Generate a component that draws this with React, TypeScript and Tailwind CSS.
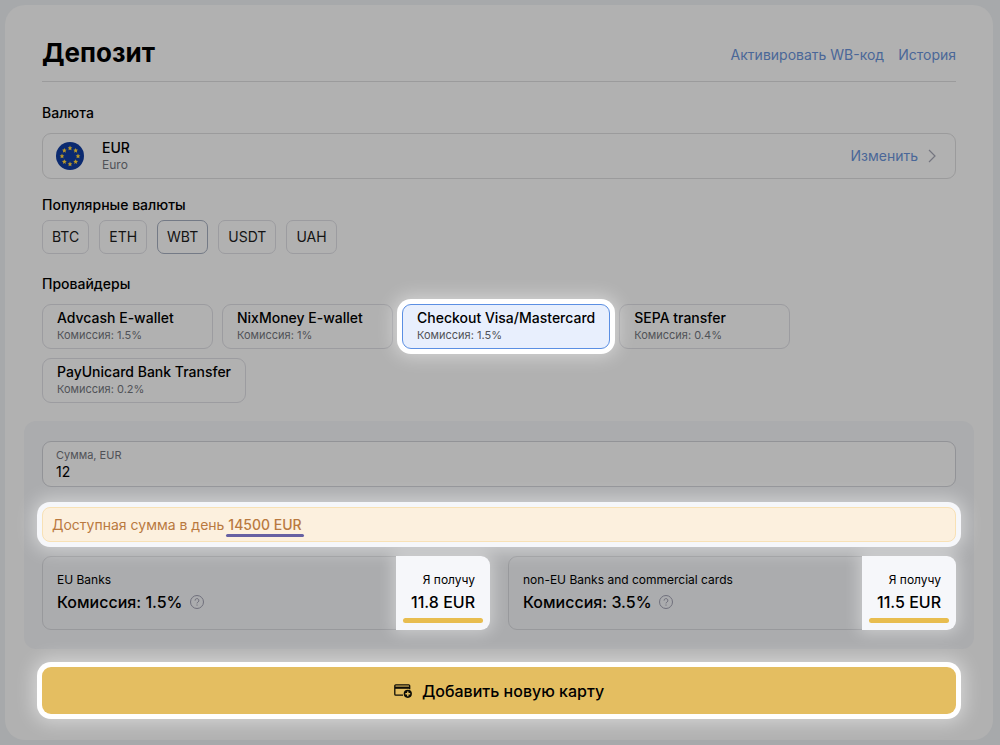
import React, { useState } from 'react'

interface Provider {
  name: string
  fee: string
}

interface BankOption {
  title: string
  fee: string
  receive: string
}

const currencies = ['BTC', 'ETH', 'WBT', 'USDT', 'UAH']

const providers: Provider[] = [
  { name: 'Advcash E-wallet', fee: '1.5%' },
  { name: 'NixMoney E-wallet', fee: '1%' },
  { name: 'Checkout Visa/Mastercard', fee: '1.5%' },
  { name: 'SEPA transfer', fee: '0.4%' },
  { name: 'PayUnicard Bank Transfer', fee: '0.2%' },
]

const banks: BankOption[] = [
  { title: 'EU Banks', fee: '1.5%', receive: '11.8 EUR' },
  { title: 'non-EU Banks and commercial cards', fee: '3.5%', receive: '11.5 EUR' },
]

const EuFlag = () => (
  <svg viewBox="0 0 28 28" className="w-7 h-7 shrink-0">
    <circle cx="14" cy="14" r="14" fill="#0b2a70" />
    {[0, 45, 90, 135, 180, 225, 270, 315].map((angle) => (
      <path
        key={angle}
        transform={`rotate(${angle} 14 14) rotate(${-angle} 14 6)`}
        d="M14 3.6l.7 1.6 1.7.2-1.3 1.1.4 1.8-1.5-.9-1.5.9.4-1.8-1.3-1.1 1.7-.2z"
        fill="#b9992a"
      />
    ))}
  </svg>
)

const ChevronIcon = () => (
  <svg viewBox="0 0 8 14" className="w-2 h-3.5" fill="none" stroke="#74757f" strokeWidth="1.2">
    <path d="M1 1l6 6-6 6" />
  </svg>
)

const HelpIcon = () => (
  <svg viewBox="0 0 14 14" className="w-3.5 h-3.5" fill="none" stroke="#70707c">
    <circle cx="7" cy="7" r="6.5" />
    <path d="M5.1 5.6a1.9 1.9 0 1 1 2.9 1.5c-.7.4-1 .7-1 1.3" />
    <path d="M7 9.5v1.1" />
  </svg>
)

const AddCardIcon = () => (
  <svg viewBox="0 0 18 14" className="w-[18px] h-3.5" fill="none" stroke="#0d0c06">
    <path d="M9 11.2H1.8a1 1 0 0 1-1-1V1.8a1 1 0 0 1 1-1h12.9a1 1 0 0 1 1 1v3.4" strokeWidth="1.3" />
    <path d="M1 3.7h14.6" strokeWidth="2.2" />
    <circle cx="13.8" cy="9.8" r="4.1" fill="#0d0c06" stroke="none" />
    <path d="M13.8 7.4v4.8M11.4 9.8h4.8" stroke="#e4be61" strokeWidth="1.4" />
  </svg>
)

export default function App() {
  const [currency, setCurrency] = useState('WBT')
  const [provider, setProvider] = useState('Checkout Visa/Mastercard')
  const [amount, setAmount] = useState('12')

  return (
    <div className="min-h-screen bg-[#a7a9ab] pt-[5px] pr-[7px] pb-1 pl-[5px] font-['Inter',sans-serif] text-sm leading-5 text-black">
      <main className="rounded-[20px] bg-[#b1b1b1] px-[37px] pt-8 pb-[26px]">
        <header className="flex items-end justify-between border-b border-[#9b9b9c] pb-3">
          <h1 className="text-[26px] leading-8 font-bold">Депозит</h1>
          <nav className="flex gap-3.5 pb-1 text-[#4a6798]">
            <a href="#code">Активировать WB-код</a>
            <a href="#history">История</a>
          </nav>
        </header>

        {/* Currency */}
        <section className="pt-[21px]">
          <h2 className="font-medium">Валюта</h2>
          <button
            type="button"
            className="mt-2.5 flex h-[46px] w-full items-center rounded-[9px] border border-[#9b9b9c] pr-[19px] pl-[13px] text-left"
          >
            <EuFlag />
            <span className="ml-[18px] flex flex-1 flex-col">
              <span className="leading-[18px] font-medium">EUR</span>
              <span className="text-xs leading-4 text-[#505257]">Euro</span>
            </span>
            <span className="mr-2.5 text-[#4a6798]">Изменить</span>
            <ChevronIcon />
          </button>
        </section>

        <section className="pt-4">
          <h2 className="font-medium">Популярные валюты</h2>
          <div className="mt-[5px] flex flex-wrap gap-2.5">
            {currencies.map((item) => (
              <button
                key={item}
                type="button"
                onClick={() => setCurrency(item)}
                className={`h-[34px] rounded-[7px] border px-[9px] text-[#141414] ${
                  item === currency ? 'border-[#747a86]' : 'border-[#9c9ca0]'
                }`}
              >
                {item}
              </button>
            ))}
          </div>
        </section>

        {/* Providers */}
        <section className="pt-5">
          <h2 className="font-medium">Провайдеры</h2>
          <div className="mt-2.5 flex flex-wrap gap-[9px]">
            {providers.map((item) => (
              <button
                key={item.name}
                type="button"
                onClick={() => setProvider(item.name)}
                className={`flex h-[45px] min-w-[171px] flex-col rounded-[9px] border px-3.5 pt-1 text-left ${
                  item.name === provider
                    ? 'relative border-[#5b8fe3] bg-[#e8effd] shadow-[0_0_0_5px_#fff,0_0_18px_8px_rgba(255,255,255,0.45)]'
                    : 'border-[#9c9ca0]'
                }`}
              >
                <span className="leading-[18px] font-medium">{item.name}</span>
                <span className="text-[11px] leading-4 text-[#505257]">Комиссия: {item.fee}</span>
              </button>
            ))}
          </div>
        </section>

        {/* Amount */}
        <section className="-mx-[18px] mt-[18px] rounded-xl bg-[#abacae] px-[18px] pt-5 pb-[19px]">
          <div className="flex h-[46px] flex-col justify-center rounded-[9px] border border-[#929397] bg-[#b1b1b1] px-[13px]">
            <label htmlFor="amount" className="text-[11px] leading-4 text-[#505257]">
              Сумма, EUR
            </label>
            <input
              id="amount"
              value={amount}
              onChange={(e) => setAmount(e.target.value)}
              className="w-full bg-transparent leading-[18px] outline-none"
            />
          </div>

          <p className="relative mt-5 flex h-[35px] items-center rounded-lg border border-[#f8e1b5] bg-[#fcf0de] px-[9px] text-[#b9793f] shadow-[0_0_0_5px_#f6f7fa,0_0_18px_9px_rgba(255,255,255,0.45)]">
            Доступная сумма в день&nbsp;
            <span className="relative font-medium">
              14500 EUR
              <span className="absolute -inset-x-0.5 -bottom-0.5 h-[3px] rounded-full bg-[#6660a3]" />
            </span>
          </p>

          <div className="mt-3.5 grid grid-cols-2 gap-[18px]">
            {banks.map((bank) => (
              <div key={bank.title} className="flex h-[74px] rounded-[9px] border border-[#98999c]">
                <div className="flex flex-1 flex-col pt-[13px] pl-3.5">
                  <span className="text-xs leading-5">{bank.title}</span>
                  <span className="flex items-center gap-[7px] text-base leading-6 font-medium">
                    Комиссия: {bank.fee}
                    <HelpIcon />
                  </span>
                </div>
                <div className="relative -m-px flex w-[94px] flex-col rounded-r-[9px] bg-[#f6f7fa] pt-3.5 pr-[15px] text-right shadow-[0_0_16px_3px_rgba(255,255,255,0.4)]">
                  <span className="text-xs leading-5">Я получу</span>
                  <span className="text-base leading-6 font-medium">{bank.receive}</span>
                  <span className="absolute right-[7px] bottom-[7px] h-[5px] w-20 rounded-full bg-[#e8bd4f]" />
                </div>
              </div>
            ))}
          </div>
        </section>

        <button
          type="button"
          className="relative mt-[18px] flex h-[47px] w-full items-center justify-center gap-2.5 rounded-[9px] bg-[#e4be61] text-base font-medium shadow-[0_0_0_5px_#fff,0_0_18px_9px_rgba(255,255,255,0.45)]"
        >
          <AddCardIcon />
          Добавить новую карту
        </button>
      </main>
    </div>
  )
}
